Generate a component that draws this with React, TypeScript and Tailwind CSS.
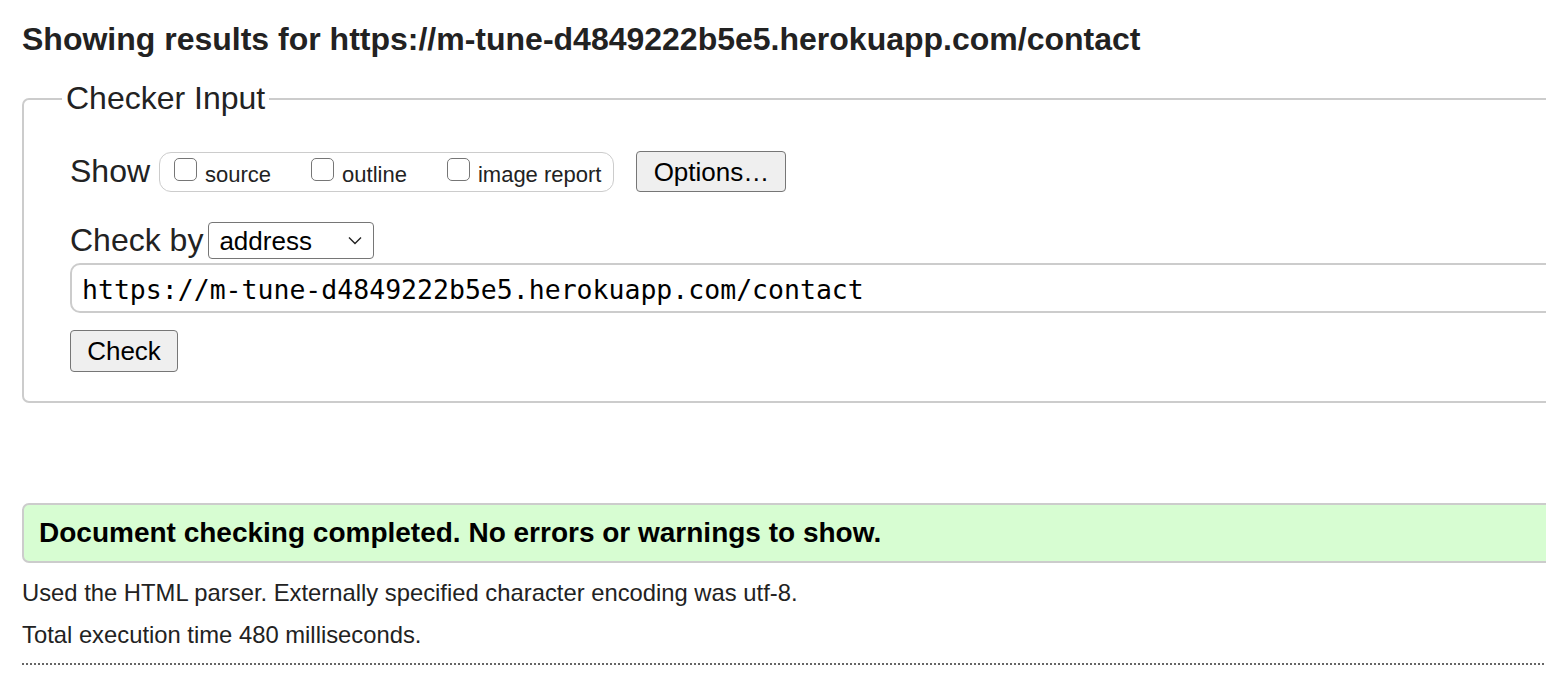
// W3C-style validator result page (zoomed)
const SANS = "font-['Liberation_Sans',Arial,sans-serif]"

function Box({ label }: { label: string }) {
  return (
    <label className="flex items-end gap-[8px]">
      <span className="mb-[7px] block h-[23px] w-[23px] rounded-[5px] border-[1.5px] border-[#767676] bg-white" />
      <span className="text-[22px] leading-[26px] text-[#222]">{label}</span>
    </label>
  )
}

export default function App() {
  const url = 'https://m-tune-d4849222b5e5.herokuapp.com/contact'

  return (
    <div className={`h-[694px] w-[1546px] overflow-hidden bg-white text-[#222] ${SANS}`}>
      <div className="w-[1700px] pl-[22px] pt-[21px]">
        <h1 className="text-[32px] font-bold leading-[37px] text-[#222]">Showing results for {url}</h1>

        <fieldset className="mt-[22px] rounded-[7px] border-2 border-[#ccc] pb-[29px] pl-[38px]">
          <legend className="px-[4px] text-[32px] leading-[37px]">Checker Input</legend>

          <div className="ml-[8px] pt-[34px]">
            {/* show row */}
            <div className="flex items-center">
              <span className="text-[32px] leading-[37px]">Show</span>
              <div className="ml-[9px] flex h-[40px] items-center gap-[40px] rounded-[12px] border-[1.5px] border-[#ccc] pl-[14px] pr-[12px] pt-[3px]">
                <Box label="source" />
                <Box label="outline" />
                <Box label="image report" />
              </div>
              <button className="ml-[22px] h-[41px] w-[150px] rounded-[4px] border-[1.5px] border-[#767676] bg-[#efefef] text-[26px] leading-[30px] text-black">
                Options…
              </button>
            </div>

            {/* check by row */}
            <div className="mt-[30px] flex items-center">
              <span className="text-[32px] leading-[37px]">Check by</span>
              <div className="ml-[5px] flex h-[37px] w-[166px] items-center justify-between rounded-[4px] border-[1.5px] border-[#767676] bg-white pl-[10px] pr-[11px]">
                <span className="text-[26px] leading-[30px] text-black">address</span>
                <svg width="14" height="9" viewBox="0 0 14 9" fill="none">
                  <path d="M1 1.5 L7 7.5 L13 1.5" stroke="#222" strokeWidth="1.4" />
                </svg>
              </div>
            </div>

            <div className="mt-[4px] flex h-[50px] w-[1600px] items-center rounded-[10px] border-2 border-[#ccc] pl-[10px] pt-[3px]">
              <span className="font-['DejaVu_Sans_Mono',Menlo,monospace] text-[26.5px] leading-[30px] text-black">{url}</span>
            </div>

            <button className="mt-[17px] h-[42px] w-[108px] rounded-[4px] border-[1.5px] border-[#767676] bg-[#efefef] text-[26px] leading-[30px] text-black">
              Check
            </button>
          </div>
        </fieldset>

        <div className="mt-[100px] flex h-[60px] items-center rounded-[7px] border-2 border-[#ccc] bg-[#d7fdd2] pl-[15px]">
          <p className="text-[28px] font-bold leading-[32px] text-black">
            Document checking completed. No errors or warnings to show.
          </p>
        </div>

        <p className="mt-[16px] text-[23.8px] leading-[27px] text-[#222]">
          Used the HTML parser. Externally specified character encoding was utf-8.
        </p>
        <p className="mt-[15px] text-[23.8px] leading-[27px] text-[#222]">Total execution time 480 milliseconds.</p>

        <div className="mt-[15px] border-t-2 border-dotted border-[#666]" />
      </div>
    </div>
  )
}
